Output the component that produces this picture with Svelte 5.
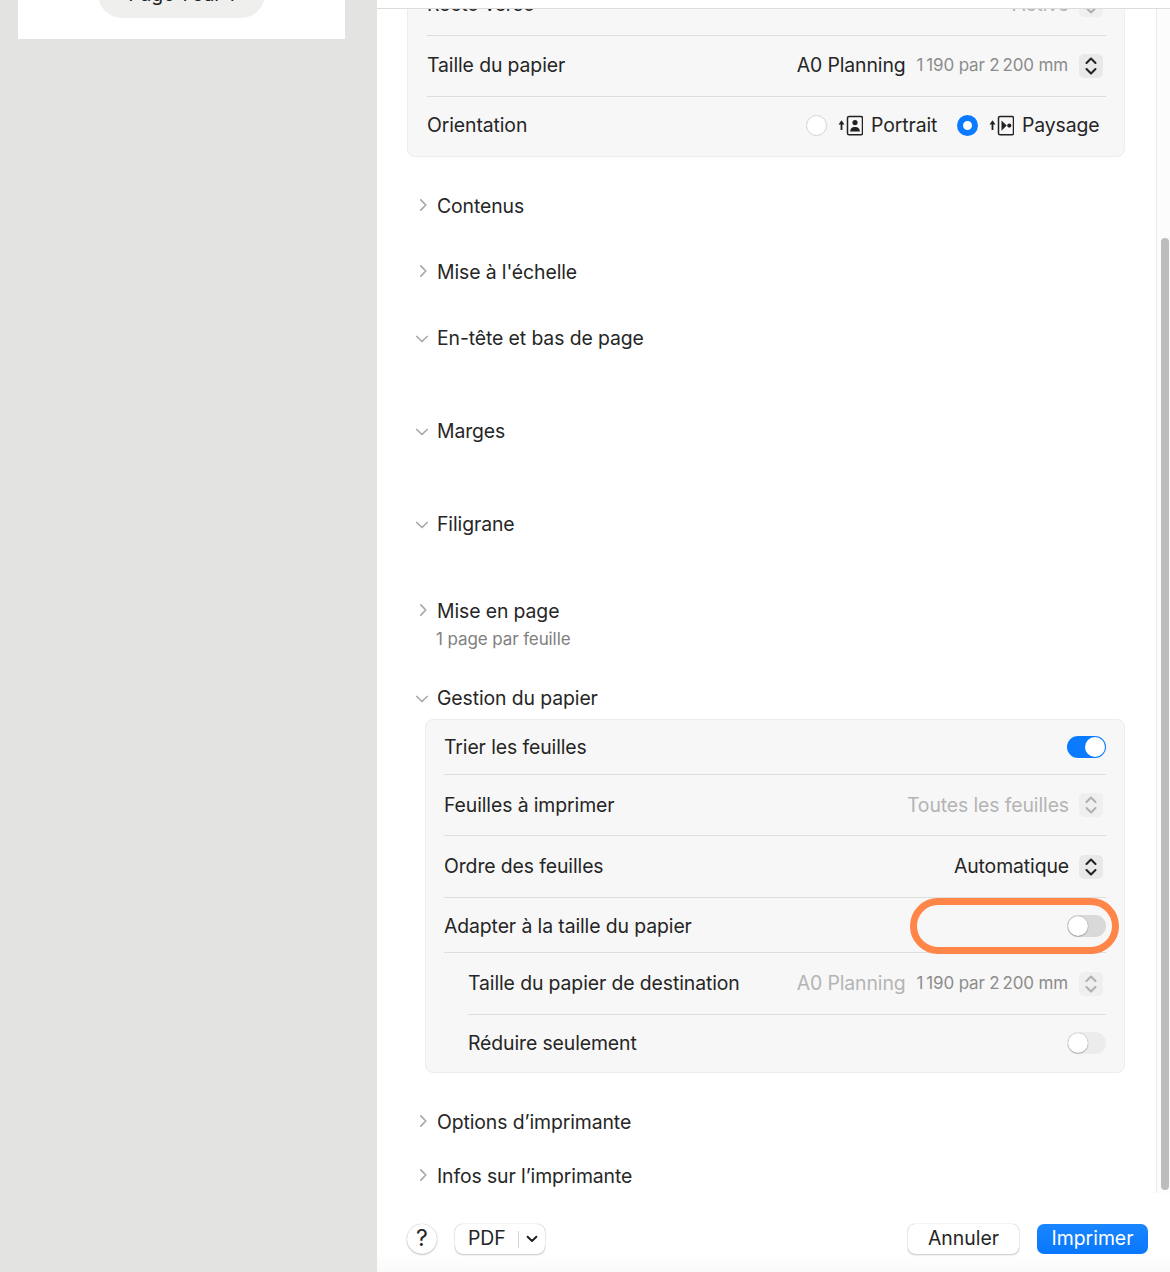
<script>
  const size = '1\u202F190 par 2\u202F200 mm';
  const rowsTop = [
    { label: 'Taille du papier', value: 'A0 Planning', sub: size }
  ];
</script>

{#snippet stepper(disabled)}
  <span class="stepper" class:off={disabled}>
    <svg width="12" height="18" viewBox="0 0 12 18" fill="none" stroke="currentColor" stroke-width="2.1" stroke-linecap="round" stroke-linejoin="round"><path d="M1.5 6 6 1.6 10.5 6M1.5 12 6 16.4 10.5 12"/></svg>
  </span>
{/snippet}

{#snippet chevron(open)}
  <svg class="chev" class:open width="14" height="14" viewBox="0 0 14 14" fill="none" stroke="#a9a9a9" stroke-width="1.7" stroke-linecap="round" stroke-linejoin="round">
    {#if open}<path d="M1.8 4.5 7 9.5 12.2 4.5"/>{:else}<path d="M4.8 1.8 9.8 7 4.8 12.2"/>{/if}
  </svg>
{/snippet}

{#snippet head(label, open)}
  <div class="head">{@render chevron(open)}<span>{label}</span></div>
{/snippet}

<div class="window">
  <aside class="preview">
    <div class="paper">
      <div class="pill"><span>Page 1 sur 1</span></div>
    </div>
  </aside>

  <main class="panel">
    <div class="topline"></div>
    <div class="middle">
      <div class="scroll">
        <div class="inner">
          <section class="group first">
            <div class="row h61 rule">
              <span class="label">Recto verso</span>
              <span class="ctl"><span class="val dim">Activé</span>{@render stepper(true)}</span>
            </div>
            {#each rowsTop as r}
              <div class="row h61 rule">
                <span class="label">{r.label}</span>
                <span class="ctl"><span class="val">{r.value}</span><span class="sub">{r.sub}</span>{@render stepper(false)}</span>
              </div>
            {/each}
            <div class="row h59 orient">
              <span class="label">Orientation</span>
              <span class="radios">
                <span class="radio"></span>
                <svg class="ori" width="25" height="21" viewBox="0.5 0 25 21" fill="none" stroke="#222"><path d="M4 15V8" stroke-width="1.8"/><path d="M1 9.4 4 5.2 7 9.4Z" fill="#222" stroke="none"/><rect x="10" y="1.4" width="15" height="18.4" rx="1.6" stroke-width="1.5"/><circle cx="17.5" cy="7.6" r="2.6" fill="#222" stroke="none"/><path d="M12.7 16.6c0-3.4 2-4.6 4.8-4.6s4.8 1.2 4.8 4.6Z" fill="#222" stroke="none"/></svg>
                <span class="rlabel portrait">Portrait</span>
                <span class="radio on"></span>
                <svg class="ori" width="25" height="21" viewBox="0.5 0 25 21" fill="none" stroke="#222"><path d="M4 15V8" stroke-width="1.8"/><path d="M1 9.4 4 5.2 7 9.4Z" fill="#222" stroke="none"/><rect x="10" y="1.4" width="15" height="18.4" rx="1.6" stroke-width="1.5"/><path d="M13 5.4 18.2 10.6 13 15.8Z" fill="#222" stroke="none"/><circle cx="20.8" cy="10.6" r="2.1" fill="#222" stroke="none"/></svg>
                <span class="rlabel paysage">Paysage</span>
              </span>
            </div>
          </section>

          <div class="s-contenus">{@render head('Contenus', false)}</div>
          <div class="s-gap">{@render head("Mise à l'échelle", false)}</div>
          <div class="s-gap">{@render head('En-tête et bas de page', true)}</div>
          <div class="s-empty">{@render head('Marges', true)}</div>
          <div class="s-empty">{@render head('Filigrane', true)}</div>
          <div class="s-layout">
            {@render head('Mise en page', false)}
            <div class="subtitle">1 page par feuille</div>
          </div>
          <div class="s-paper">{@render head('Gestion du papier', true)}</div>

          <section class="group second">
            <div class="row h55 rule plain">
              <span class="label">Trier les feuilles</span>
              <span class="toggle on"></span>
            </div>
            <div class="row h61 rule half">
              <span class="label">Feuilles à imprimer</span>
              <span class="ctl"><span class="val dim">Toutes les feuilles</span>{@render stepper(true)}</span>
            </div>
            <div class="row h62 rule">
              <span class="label">Ordre des feuilles</span>
              <span class="ctl"><span class="val">Automatique</span>{@render stepper(false)}</span>
            </div>
            <div class="row h55 rule ringrow">
              <span class="label">Adapter à la taille du papier</span>
              <span class="toggle"></span>
              <span class="ring"></span>
            </div>
            <div class="row h62 rule indent">
              <span class="label">Taille du papier de destination</span>
              <span class="ctl"><span class="val dim">A0 Planning</span><span class="sub">{size}</span>{@render stepper(true)}</span>
            </div>
            <div class="row h57 indent half">
              <span class="label">Réduire seulement</span>
              <span class="toggle off"></span>
            </div>
          </section>

          <div class="s-options">{@render head('Options d’imprimante', false)}</div>
          <div class="s-infos">{@render head('Infos sur l’imprimante', false)}</div>
        </div>
      </div>
      <div class="track"><div class="thumb"></div></div>
    </div>

    <footer class="foot">
      <div class="foot-left">
        <button class="help">?</button>
        <div class="pdf">
          <span class="pdf-t">PDF</span>
          <span class="pdf-sep"></span>
          <svg width="12" height="8" viewBox="0 0 12 8" fill="none" stroke="#222" stroke-width="2" stroke-linecap="round" stroke-linejoin="round"><path d="M1.6 1.8 6 6 10.4 1.8"/></svg>
        </div>
      </div>
      <div class="foot-right">
        <button class="btn">Annuler</button>
        <button class="btn primary">Imprimer</button>
      </div>
    </footer>
  </main>
</div>

<style>
  :global(body) { margin: 0; background: #fff; }
  .window {
    width: 1170px; height: 1272px; display: flex; overflow: hidden;
    font-family: Inter, "Liberation Sans", sans-serif; font-size: 19.4px; color: #252525;
    letter-spacing: -0.1px;
  }
  .preview { width: 377px; flex: none; background: #e3e3e1; padding-left: 18px; box-sizing: border-box; }
  .paper { width: 327px; height: 39px; background: #fff; display: flex; justify-content: center; align-items: flex-end; padding-bottom: 21px; box-sizing: border-box; overflow: hidden; }
  .pill { width: 167px; height: 48px; flex: none; border-radius: 24px; background: #efefed; display: flex; align-items: center; justify-content: center; }
  .pill span { color: #222; }

  .panel { flex: 1; min-width: 0; display: flex; flex-direction: column; background: #fff; }
  .topline { height: 8px; flex: none; border-bottom: 1px solid #dcdcdc; background: #fff; position: relative; z-index: 1; }
  .middle { flex: none; height: 1184px; display: flex; min-height: 0; }
  .scroll { flex: 1; overflow: hidden; min-width: 0; }
  .inner { margin-top: -35px; padding-left: 30px; padding-right: 31px; }

  .track { width: 14px; flex: none; border-left: 1px solid #ececec; box-sizing: border-box; padding-left: 4px; background: #fcfcfc; display: flex; flex-direction: column; justify-content: flex-end; }
  .thumb { width: 8px; height: 952px; margin-bottom: 3px; background: #bdbdbd; border-radius: 4px; }

  .group { background: #f7f7f7; border: 1px solid #ededed; border-radius: 8px; box-sizing: border-box; }
  .second { margin-left: 18px; }

  .row { display: flex; align-items: center; justify-content: space-between; margin: 0 18px 0 18px; box-sizing: border-box; position: relative; }
  .rule { border-bottom: 1px solid #dedede; }
  .first .row { margin-left: 19px; }
  .h55 { height: 55px; } .h57 { height: 57px; } .h59 { height: 59px; } .h61 { height: 61px; } .h62 { height: 62px; }
  .indent { margin-left: 42px; }

  .label, .val, .sub { padding-bottom: 2px; }
  .plain .label { padding-bottom: 0; }
  .half .label, .half .val { padding-bottom: 1px; }
  .ringrow .label { padding-bottom: 0; padding-top: 2px; }
  .ringrow .toggle { margin-top: 1px; }
  .orient { padding-bottom: 3px; }
  .orient .label { padding-bottom: 0; }

  .ctl { display: flex; align-items: center; }
  .val { color: #252525; }
  .val.dim { color: #b4b4b4; }
  .sub { color: #8c8c8c; font-size: 17px; margin: 0 1px 0 11px; letter-spacing: -0.15px; white-space: nowrap; }
  .stepper { width: 24px; height: 24px; margin: 0 3px 0 10px; border-radius: 5px; background: #e9e9e9; color: #222; display: flex; align-items: center; justify-content: center; }
  .stepper.off { background: #efefef; color: #b0b0b0; }

  .radios { display: flex; align-items: center; margin-right: 8px; }
  .radio { width: 21px; height: 21px; box-sizing: border-box; border-radius: 50%; background: #fff; border: 1px solid #d4d4d4; flex: none; }
  .radio.on { background: #fff; border: 6px solid #0a7bff; }
  .ori { margin-left: 11px; flex: none; }
  .rlabel { margin-left: 8px; white-space: nowrap; }
  .portrait { width: 67px; margin-right: 19px; }
  .paysage { width: 76px; }

  .toggle { width: 39px; height: 22px; border-radius: 11px; background: #d9d9d9; position: relative; display: block; }
  .toggle::after { content: ""; position: absolute; top: 1px; left: 1px; width: 20px; height: 20px; border-radius: 50%; background: #fff; box-shadow: 0 0 1px rgba(0,0,0,.45), 0 1px 1px rgba(0,0,0,.2); }
  .toggle.on { background: #0a7bff; }
  .toggle.on::after { left: 18px; box-shadow: none; }
  .toggle.off { background: #ececec; margin-bottom: 2px; }
  .ring { position: absolute; right: -13px; top: 0; width: 209px; height: 56px; box-sizing: border-box; border: 7px solid #ff8548; border-radius: 28px; pointer-events: none; }

  .head { height: 42px; display: flex; align-items: center; position: relative; padding-left: 30px; color: #262626; }
  .chev { position: absolute; left: 9px; top: 13px; }
  .chev.open { left: 8px; top: 15px; }
  .s-contenus { margin-top: 28px; }
  .s-gap { margin-top: 24px; }
  .s-empty { margin-top: 51px; }
  .s-layout { margin-top: 45px; }
  .subtitle { margin: -4px 0 0 29px; height: 22px; line-height: 22px; color: #808080; font-size: 17px; }
  .s-paper { margin-top: 27px; }
  .s-options { margin-top: 28px; }
  .s-infos { margin-top: 12px; }

  .foot { flex: 1; display: flex; align-items: flex-start; justify-content: space-between; padding: 31px 22px 0 30px; background: linear-gradient(#fff 0, #fff 60px, #fafafa 79px); }
  .foot-left, .foot-right { display: flex; align-items: center; }
  .foot-right { gap: 18px; }
  button { font: inherit; color: #252525; cursor: default; border: none; padding: 0 0 2px; }
  .help { width: 30px; height: 30px; border-radius: 50%; background: #fff; box-shadow: 0 0 1px rgba(0,0,0,.35), 0 1px 2px rgba(0,0,0,.2); font-size: 23px; margin-right: 18px; font-weight: 400; }
  .pdf { width: 90px; height: 30px; background: #fff; border-radius: 8px; box-shadow: 0 0 1px rgba(0,0,0,.35), 0 1px 2px rgba(0,0,0,.2); display: flex; align-items: center; position: relative; }
  .pdf-t { margin-left: 13px; width: 50px; padding-bottom: 2px; }
  .pdf-sep { width: 1px; height: 17px; background: #d6d6d6; }
  .pdf svg { margin-left: 7px; }
  .btn { width: 111px; height: 30px; border-radius: 7px; background: #fff; box-shadow: 0 0 1px rgba(0,0,0,.35), 0 1px 2px rgba(0,0,0,.2); }
  .btn.primary { background: linear-gradient(#1a86ff, #0877fb); color: #fff; box-shadow: none; }
</style>
